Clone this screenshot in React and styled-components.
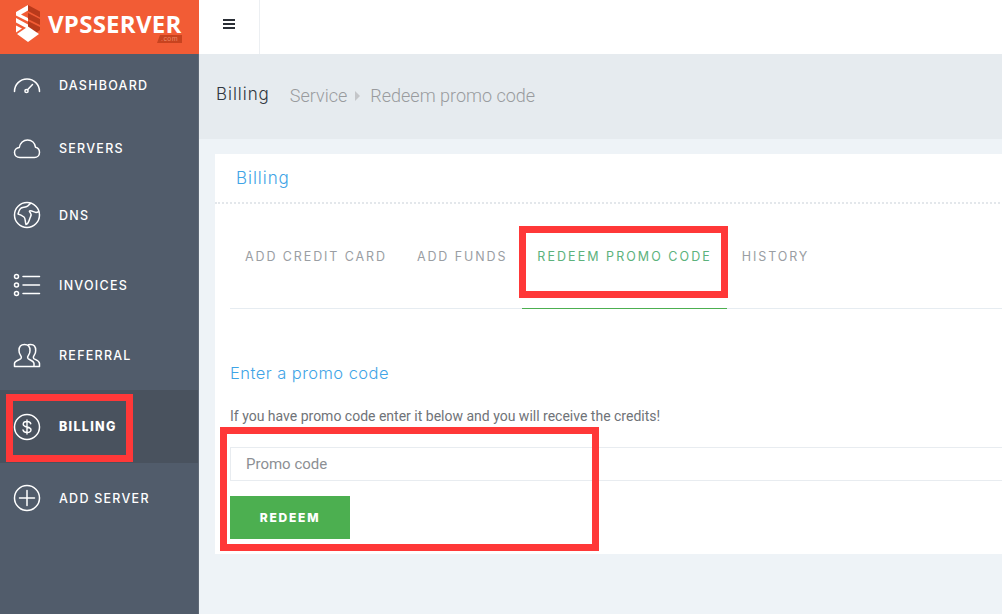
import React from "react";
import styled, { createGlobalStyle } from "styled-components";

const Global = createGlobalStyle`
  html, body { margin: 0; padding: 0; height: 100%; overflow: hidden; background: #eef3f7; }
  * { box-sizing: border-box; }
  #root { height: 100%; }
`;
const Shell = styled.div`
  position: relative;
  display: grid;
  grid-template-columns: 199px 1fr;
  height: 614px;
  overflow: hidden;
  font-family: Roboto, "Liberation Sans", sans-serif;
`;
const Side = styled.aside`
  display: flex;
  flex-direction: column;
  background: #515c6b;
  border-right: 1px solid #5f6976;
`;
const Brand = styled.div`
  height: 54px;
  margin-right: -1px;
  background: #f25c35;
  display: flex;
  align-items: flex-start;
  gap: 8px;
  padding: 5px 0 0 16px;
  position: relative;
`;
const BrandName = styled.span`
  font-family: "Open Sans", sans-serif;
  font-weight: 700;
  font-size: 24px;
  line-height: 22px;
  margin-top: 8px;
  color: #fff;
  letter-spacing: 0.25px;
`;
const BrandTld = styled.span`
  position: absolute;
  left: 157px;
  top: 35px;
  width: 25px;
  height: 8px;
  background: #c8431f;
  clip-path: polygon(12% 0, 100% 0, 100% 100%, 0 100%);
  color: #f08a68;
  font: 400 7px/8px "Liberation Sans", sans-serif;
  text-align: center;
  letter-spacing: .4px;
`;
const Nav = styled.nav`
  display: flex;
  flex-direction: column;
`;
const NavItem = styled.div`
  height: ${p => p.$h}px;
  display: flex;
  align-items: center;
  gap: 18px;
  padding-left: 13px;
  background: ${p => (p.$active ? "#49525e" : "transparent")};
  color: #fff;
  font-family: Inter, sans-serif;
  font-size: 12.5px;
  font-weight: ${p => (p.$active ? 800 : 500)};
  letter-spacing: ${p => (p.$active ? "1.3px" : "1.25px")};
  svg { flex: none; }
`;
const Main = styled.main`
  display: flex;
  flex-direction: column;
  min-width: 0;
`;
const TopBar = styled.header`
  height: 54px;
  background: #fff;
  display: flex;
`;
const MenuCell = styled.div`
  width: 61px;
  padding-bottom: 6px;
  border-right: 1px solid #eceff2;
  display: flex;
  align-items: center;
  justify-content: center;
`;
const Crumbs = styled.div`
  height: 85px;
  background: #e6ebef;
  display: flex;
  align-items: center;
  padding: 0 0 3px 17px;
`;
const PageName = styled.span`
  font-family: Inter, sans-serif;
  font-weight: 300;
  font-size: 17px;
  letter-spacing: 0.95px;
  color: #2f3640;
  margin-right: 20px;
  position: relative;
  top: -1px;
`;
const Crumb = styled.span`
  font-size: 18px;
  font-weight: 300;
  color: #999b9e;
`;
const CrumbArrow = styled.i`
  width: 0;
  height: 0;
  margin: 2px 10px 0 8px;
  border-left: 5px solid #c4c6c9;
  border-top: 5px solid transparent;
  border-bottom: 5px solid transparent;
`;
const Body = styled.div`
  flex: 1;
  padding: 15px 0 0 16px;
`;
const Card = styled.section`
  background: #fff;
  height: 400px;
  width: 900px;
`;
const CardHead = styled.div`
  height: 50px;
  padding-left: 21px;
  display: flex;
  align-items: center;
  border-bottom: 2px dotted #e3e7eb;
  font-family: Inter, sans-serif;
  font-weight: 300;
  font-size: 17px;
  letter-spacing: 0.95px;
  color: #3fa4e6;
`;
const CardBody = styled.div`
  padding: 27px 0 0 15px;
`;
const Tabs = styled.div`
  display: flex;
  height: 78px;
  border-bottom: 1px solid #e6ecf1;
`;
const Tab = styled.div`
  padding: 0 15px 26px;
  height: 78px;
  display: flex;
  align-items: center;
  font-family: Inter, sans-serif;
  font-size: 12.5px;
  font-weight: 400;
  letter-spacing: ${p => (p.$active ? "2.05px" : "1.9px")};
  color: ${p => (p.$active ? "#5cb27c" : "#9a9ea3")};
  border-bottom: 1px solid ${p => (p.$active ? "#4caf50" : "transparent")};
`;
const Heading = styled.h3`
  margin: 54px 0 0;
  font-family: Inter, sans-serif;
  font-weight: 300;
  font-size: 16.5px;
  letter-spacing: 0.45px;
  line-height: 20px;
  color: #3fa4e6;
`;
const Help = styled.p`
  margin: 23px 0 0;
  font-size: 14px;
  line-height: 20px;
  color: #6f7378;
`;
const Input = styled.input`
  display: block;
  width: 780px;
  height: 34px;
  margin-top: 21px;
  padding: 0 15px;
  border: 1px solid #e8ecf0;
  border-right: 0;
  outline: none;
  font: 400 15px Roboto, sans-serif;
  color: #555;
  &::placeholder { color: #8c8f94; opacity: 1; }
`;
const Button = styled.button`
  display: block;
  width: 120px;
  height: 43px;
  margin-top: 15px;
  border: 0;
  background: #4caf50;
  color: #fff;
  font-family: Inter, sans-serif;
  font-weight: 800;
  font-size: 12px;
  letter-spacing: 1.8px;
`;
const Frame = styled.div`
  position: absolute;
  left: ${p => p.$x}px;
  top: ${p => p.$y}px;
  width: ${p => p.$w}px;
  height: ${p => p.$h}px;
  border: 7px solid #ff3838;
  pointer-events: none;
`;

const Ico = ({ children }) => (
  <svg width="28" height="28" viewBox="0 0 28 28" fill="none" stroke="#fff" strokeWidth="1.5" strokeLinecap="round" strokeLinejoin="round">
    {children}
  </svg>
);

const items = [
  { label: "DASHBOARD", h: 62, icon: <Ico><path d="M1.5 20.5C1.5 13.5 7 8 14 8s12.5 5.500 12.500 12.500" /><circle cx="13.500" cy="20" r="1.600" /><path d="M14.500 18.800L19.500 13.500" /></Ico> },
  { label: "SERVERS", h: 64, icon: <Ico><path d="M7 23.500C3.500 23.500 1.500 21 1.500 18.500c0-2.800 2.200-4.800 4.800-5C7 9 10.500 6 14.500 6c4.300 0 7.500 3 8 7.200 2.200.5 4 2.500 4 5.300 0 2.800-2.200 5-5 5z" /></Ico> },
  { label: "DNS", h: 70, icon: <Ico><circle cx="14" cy="14" r="12.500" /><path d="M18 2.300c-2.500 1-2 2.700-4.800 3.500C11 6.500 9 6 7.500 7.500 6 9 5.500 11 5 13c2 .5 4 1.500 6 3 1.500 1.200 1 4.500 2 7.500 2.500-.5 3-4 4-6.500.7-1.800 2-3 .5-5-.7-1-1.500-1.500-1-2 2-.8 4 1 6.500 1.500 1-.2 1.800-.5 2.500-.8" /></Ico> },
  { label: "INVOICES", h: 70, icon: <Ico><circle cx="3.500" cy="5.500" r="2" /><circle cx="3.500" cy="14" r="2" /><circle cx="3.500" cy="22.500" r="2" /><path d="M10 5.500h16.500M10 14h16.500M10 22.500h16.500" /></Ico> },
  { label: "REFERRAL", h: 70, icon: <Ico><path d="M1.500 25.500v-3c0-2.500 5-3.500 6.500-5 .8-1 .5-2-.5-3.300C6.500 13 6 11.500 6 9.500 6 6 8 3.500 11.500 3.500S17 6 17 9.500c0 2-.5 3.500-1.500 4.700-1 1.300-1.300 2.300-.5 3.300 1.500 1.500 6 2.500 6 5v3z" /><path d="M15.500 3.800c.8-.3 1.500-.4 2.200-.4 3.500 0 5 2.600 5 6 0 2-.5 3.600-1.500 4.800-1 1.300-1.300 2.300-.5 3.300 1.300 1.300 5.800 2 5.800 5v3h-5" /></Ico> },
  { label: "BILLING", h: 73, active: true, icon: <Ico><circle cx="14" cy="14" r="12.500" /><path d="M17.800 10.800c-.4-1.500-1.800-2.300-3.800-2.300-2.200 0-3.800 1-3.800 2.700 0 3.800 7.800 1.800 7.800 5.600 0 1.800-1.700 2.700-4 2.700-2.200 0-3.600-.9-4-2.500M14 7v14" strokeWidth="1.400" /></Ico> },
  { label: "ADD SERVER", h: 70, icon: <Ico><circle cx="14" cy="14" r="12.500" /><path d="M14 6.500v15M6.500 14h15" /></Ico> },
];

export default function App() {
  return (
    <Shell>
      <Global />
      <Side>
        <Brand>
          <svg width="24" height="37" viewBox="0 0 24 37" style={{ flex: "none" }}>
            <path fill="#b93a1b" d="M12 0l12 6.500v6L12 6zM12 8l12 6v6l-12-6zM12 16l12 6v3l-5 3.500-7-4.500z" />
            <path fill="#fff" d="M12 0v5.500L5 9.500l7 3.500v3.500L0 10.500V7zM0 13l12 6.500v4.500L0 17.500zM0 20.500L6 23.500 0 27.500z" />
            <path fill="#fff" d="M12 21.500l11 7.500-11 8-11-8z" />
          </svg>
          <BrandName>VPSSERVER</BrandName>
          <BrandTld>.com</BrandTld>
        </Brand>
        <Nav>
          {items.map(i => (
            <NavItem key={i.label} $h={i.h} $active={i.active}>
              {i.icon}
              <span>{i.label}</span>
            </NavItem>
          ))}
        </Nav>
      </Side>
      <Main>
        <TopBar>
          <MenuCell>
            <svg width="12" height="10" viewBox="0 0 12 10"><path d="M0 1h12M0 5h12M0 9h12" stroke="#2b2f36" strokeWidth="2" /></svg>
          </MenuCell>
        </TopBar>
        <Crumbs>
          <PageName>Billing</PageName>
          <Crumb>Service</Crumb>
          <CrumbArrow />
          <Crumb>Redeem promo code</Crumb>
        </Crumbs>
        <Body>
          <Card>
            <CardHead>Billing</CardHead>
            <CardBody>
              <Tabs>
                <Tab>ADD CREDIT CARD</Tab>
                <Tab>ADD FUNDS</Tab>
                <Tab $active>REDEEM PROMO CODE</Tab>
                <Tab>HISTORY</Tab>
              </Tabs>
              <Heading>Enter a promo code</Heading>
              <Help>If you have promo code enter it below and you will receive the credits!</Help>
              <Input placeholder="Promo code" />
              <Button>REDEEM</Button>
            </CardBody>
          </Card>
        </Body>
      </Main>
      <Frame $x={6} $y={394} $w={127} $h={68} />
      <Frame $x={519} $y={226} $w={209} $h={72} />
      <Frame $x={220} $y={427} $w={379} $h={124} />
    </Shell>
  );
}
